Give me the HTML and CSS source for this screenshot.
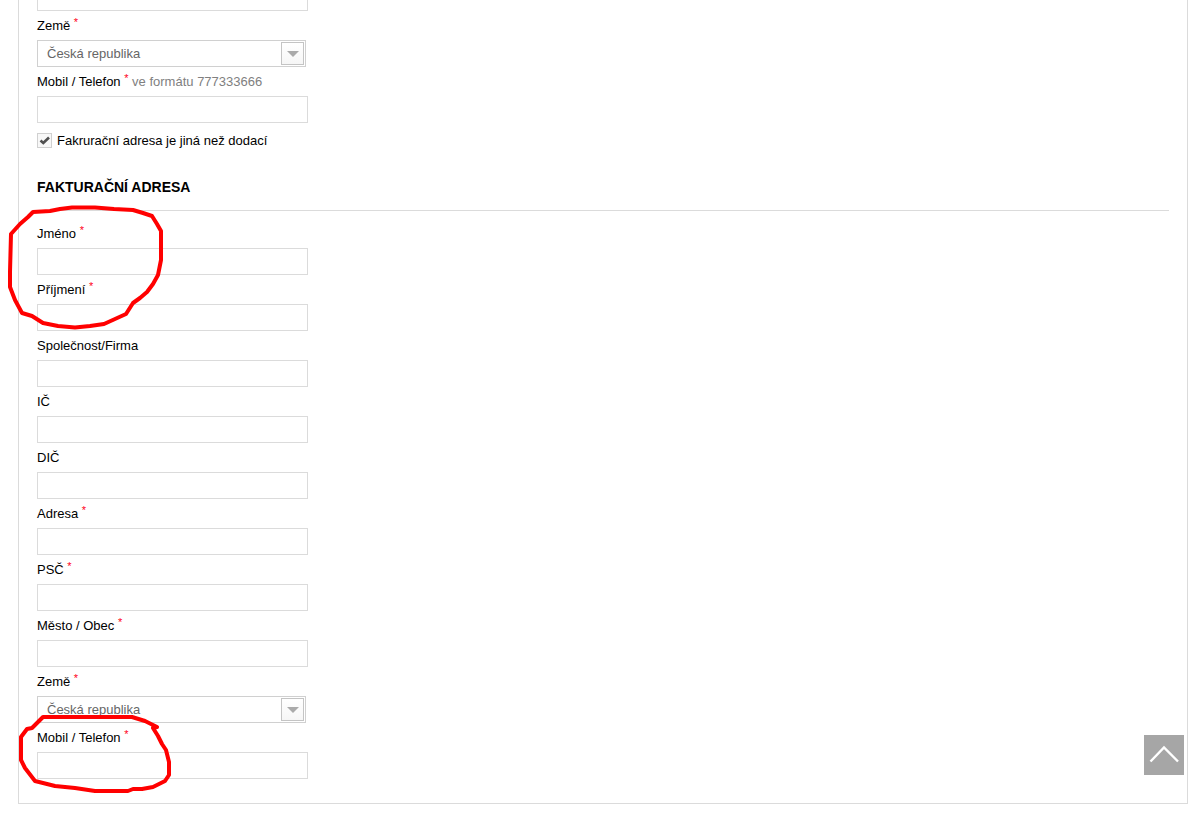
FILE: index.html
```html
<!doctype html>
<html lang="cs">
<head>
  <meta charset="utf-8">
  <meta name="viewport" content="width=device-width, initial-scale=1">
  <title>Fakturační adresa</title>
  <link rel="stylesheet" href="styles.css">
</head>
<body>
  <main class="page">
    <form class="panel">
      <div class="field field-first">
        <input class="text" type="text" aria-label="Město / Obec">
      </div>
      <div class="field">
        <label for="country">Země <sup>*</sup></label>
        <div class="select">
          <select id="country"><option>Česká republika</option></select>
          <span class="arrow"><svg width="12" height="6" viewBox="0 0 12 6"><path d="M0 0h12L6 6z" fill="#aaa"/></svg></span>
        </div>
      </div>
      <div class="field">
        <label for="phone">Mobil / Telefon <sup>*</sup> <span class="hint">ve formátu 777333666</span></label>
        <input class="text" id="phone" type="tel">
      </div>
      <div class="check">
        <input id="other" type="checkbox" checked>
        <label for="other">Fakrurační adresa je jiná než dodací</label>
      </div>

      <h2>Fakturační adresa</h2>

      <div class="field">
        <label for="b-name">Jméno <sup>*</sup></label>
        <input class="text" id="b-name" type="text">
      </div>
      <div class="field">
        <label for="b-surname">Příjmení <sup>*</sup></label>
        <input class="text" id="b-surname" type="text">
      </div>
      <div class="field">
        <label for="b-company">Společnost/Firma</label>
        <input class="text" id="b-company" type="text">
      </div>
      <div class="field">
        <label for="b-ic">IČ</label>
        <input class="text" id="b-ic" type="text">
      </div>
      <div class="field">
        <label for="b-dic">DIČ</label>
        <input class="text" id="b-dic" type="text">
      </div>
      <div class="field">
        <label for="b-address">Adresa <sup>*</sup></label>
        <input class="text" id="b-address" type="text">
      </div>
      <div class="field">
        <label for="b-zip">PSČ <sup>*</sup></label>
        <input class="text" id="b-zip" type="text">
      </div>
      <div class="field">
        <label for="b-city">Město / Obec <sup>*</sup></label>
        <input class="text" id="b-city" type="text">
      </div>
      <div class="field">
        <label for="b-country">Země <sup>*</sup></label>
        <div class="select">
          <select id="b-country"><option>Česká republika</option></select>
          <span class="arrow"><svg width="12" height="6" viewBox="0 0 12 6"><path d="M0 0h12L6 6z" fill="#aaa"/></svg></span>
        </div>
      </div>
      <div class="field">
        <label for="b-phone">Mobil / Telefon <sup>*</sup></label>
        <input class="text" id="b-phone" type="tel">
      </div>
    </form>

    <!-- hand-drawn marks over the fields -->
    <svg class="marks" width="180" height="800" viewBox="0 0 180 800" aria-hidden="true">
      <path d="M33 212L50 211L60 209L72 207.500L95 207.500L114 209L133 210L143 213L152 216L157 224L161 231V260L158 275L153 284L147 292L140 298L133 303L126 314L115 319L104 324L90 326L75 327.500L58 326L43 323L32 316L22 313L15 300L10 287V272L11 234L20 224L28 217Z"/>
      <path d="M43 717H132L145 721L157 727L153 728L158 736L162 744L166 750L169 762V775L165 781L153 787L142 789H133L128 791H95L75 788L55 786L35 781L25 768L21 760V737L27 729L32 728Z"/>
    </svg>
  </main>

  <a class="to-top" href="#" aria-label="Nahoru">
    <svg width="40" height="40" viewBox="0 0 40 40"><path d="M6.500 26.500L20 12.500L34 26.500" fill="none" stroke="#fff" stroke-width="2.400"/></svg>
  </a>
</body>
</html>
```
FILE: styles.css
```css
*,*::before,*::after{box-sizing:border-box}
body{margin:0;background:#fff;color:#000;font:13px/29px "Liberation Sans",Arial,sans-serif}
.page{position:relative;overflow:hidden;padding:0 12px 15px 18px}
.panel{border:1px solid #dbdbdb;border-top:0;padding:0 18px 24px}
.field{display:flex;flex-direction:column;align-items:flex-start}
/* the form is scrolled, only the bottom of this input shows */
.field-first{margin-top:-16px}
.field label{display:block;height:29px}
sup{color:#ff0018;font-size:11px;line-height:0;vertical-align:4px}
.hint{color:#808080}
.text{width:271px;max-width:100%;height:27px;border:1px solid #dbdbdb;background:#fff;padding:0 9px;font:inherit;line-height:normal;outline:none}
.text:focus,.select select:focus{border-color:#999}

.select{position:relative;width:269px;max-width:100%;height:27px}
.select select{display:block;width:100%;height:27px;border:1px solid #d0d0d0;border-radius:0;background:#fff;color:#666;padding:0 30px 0 9px;font:inherit;line-height:normal;appearance:none;outline:none}
.arrow{position:absolute;top:2px;right:2px;width:23px;height:23px;display:flex;align-items:center;justify-content:center;border:1px solid #c4c4c4;background:linear-gradient(#fff,#f6f6f6);pointer-events:none}

.check{display:flex;align-items:center;gap:5px;height:15px;margin-top:10px}
.check label{line-height:30px}
.check input{appearance:none;margin:0;width:15px;height:15px;border:1px solid #d0d0d0;background:#f8f8f8}
.check input:checked{background:#f8f8f8 url("data:image/svg+xml,%3Csvg xmlns='http://www.w3.org/2000/svg' viewBox='0 0 13 13'%3E%3Cpath d='M2.5 6.5L5.3 9L11 3.5' fill='none' stroke='%23505050' stroke-width='2.6'/%3E%3C/svg%3E") center/13px 13px no-repeat}

h2{margin:24px 0 8px;border-bottom:1px solid #dbdbdb;padding-bottom:8px;font-size:14px;line-height:30px;text-transform:uppercase}

.marks{position:absolute;top:0;left:0;fill:none;stroke:red;stroke-width:4;stroke-linejoin:round;pointer-events:none}
.to-top{position:fixed;right:16px;bottom:44px;width:40px;height:40px;background:#a6a6a6}
.to-top svg{display:block}
```
